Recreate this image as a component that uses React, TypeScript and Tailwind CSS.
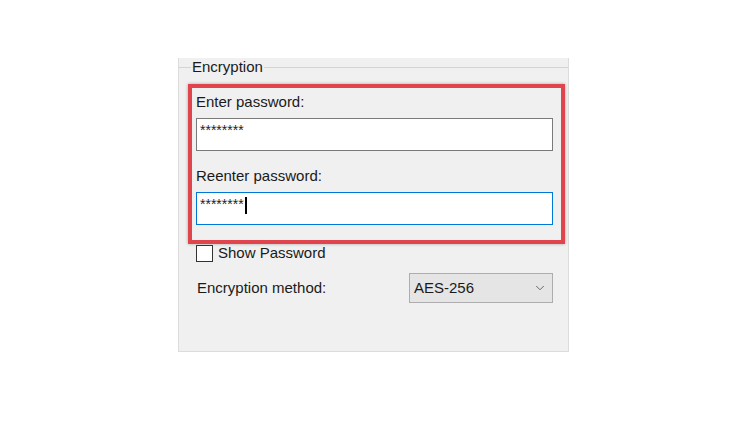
import { ChevronDown } from "lucide-react";

function Field({ blue, cursor }: { blue?: boolean; cursor?: boolean }) {
  return (
    <div
      className={
        "mt-[7px] flex h-[33px] w-full items-start bg-white pl-[3px] pt-[2px] " +
        (blue ? "border border-[#0078d7]" : "border border-[#7a7a7a]")
      }
    >
      <span className="text-[14px] leading-[18px] text-[#222]">********</span>
      {cursor && <span className="ml-[1px] mt-[2px] h-[17px] w-[2px] bg-black" />}
    </div>
  );
}

export default function App() {
  return (
    <div className="min-h-[425px] w-[750px] bg-white pt-[58px] font-['Liberation_Sans',Arial,sans-serif] text-[15px] text-[#1a1a1a]">
      <div className="ml-[178px] h-[294px] w-[391px] border-x border-b border-[#dcdcdc] bg-[#f0f0f0]">
        <fieldset className="m-0 border-t border-[#d4d4d4] p-0">
          <legend className="ml-[12px] px-[1px] leading-[18px]">Encryption</legend>

          {/* red highlight box */}
          <div className="ml-[9px] mt-[8px] w-[377px] border-[4px] border-[#e0444c] pb-[15px] pl-[4px] pr-[8px] pt-[5px] shadow-[0_0_3px_rgba(0,0,0,0.3)]">
            <div className="leading-[18px]">Enter password:</div>
            <Field />
            <div className="mt-[16px] leading-[18px]">Reenter password:</div>
            <Field blue cursor />
          </div>

          <div className="ml-[17px] flex h-[18px] items-center gap-[5px]">
            <span className="h-[17px] w-[17px] border border-[#333] bg-white" />
            <span className="leading-[18px]">Show Password</span>
          </div>

          <div className="mt-[11px] flex items-center justify-between pl-[18px] pr-[15px]">
            <span className="leading-[18px]">Encryption method:</span>
            <div className="flex h-[30px] w-[144px] items-center justify-between border border-[#adadad] bg-[#e5e5e5] pl-[4px] pr-[5px]">
              <span className="leading-[18px]">AES-256</span>
              <ChevronDown className="h-[14px] w-[14px] text-[#555]" strokeWidth={1.5} />
            </div>
          </div>
        </fieldset>
      </div>
    </div>
  );
}
